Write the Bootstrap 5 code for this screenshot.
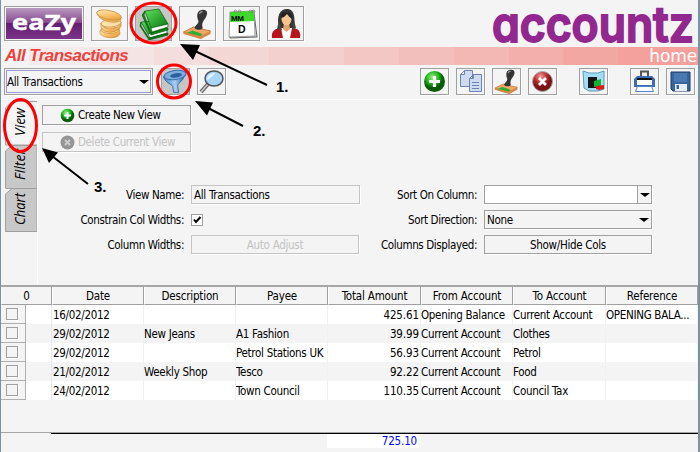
<!DOCTYPE html>
<html lang="en">
<head>
<meta charset="utf-8">
<title>All Transactions</title>
<link href="https://cdn.jsdelivr.net/npm/bootstrap@5.3.0/dist/css/bootstrap.min.css" rel="stylesheet">
<style>
body{width:700px;height:452px;background:#f4f4f4;color:#000;font:11.5px/14px "DejaVu Sans Condensed","DejaVu Sans",sans-serif;font-stretch:condensed;letter-spacing:-.3px;overflow:hidden}
svg{font-stretch:normal}
.shell{width:700px;height:452px;border-left:1px solid #7593a0;border-right:2px solid #7593a0}
.bar-top{height:47px;padding:6px 3px 0 3px}
.tool{background:#f4f4f4;border:1px solid #a0a0a0;box-shadow:1px 1px 0 #fff;padding:0;border-radius:0;flex:none;display:flex;align-items:center;justify-content:center}
.tool-lg{width:37px;height:35px}
.tool-sm{width:29px;height:27px}
.pressed{background:#c6c6c6}
.tool-logo{width:80px;height:35px}
.logo-text{font-family:Inter,"Open Sans",sans-serif;font-weight:600;font-size:49px;font-feature-settings:"cv11" 1}
.banner{height:18px;padding:0 1px 0 4px;background:linear-gradient(90deg,#f4f4f4 0 28px,#f4ecec 28px 88px,#f4e4e4 88px 153px,#f4dedd 153px 208px,#f3d7d5 208px 268px,#f3cfcd 268px 343px,#f3c7c4 343px 398px,#f3bfbc 398px 453px,#f3b7b4 453px 508px,#f3afab 508px 562px,#f3a7a3 562px 617px,#f4a09c 617px)}
.title-text{font:italic bold 17px/18px "Liberation Sans",sans-serif;color:#f0423c;letter-spacing:-.55px}
.home-text{font:17px/19px "DejaVu Sans",sans-serif;color:#fff;letter-spacing:-.1px}
.bar-tools{height:34px;padding:3px 3px 0}
.combo{border:1px solid #a0a0a0;box-shadow:1px 1px 0 #fff;background:#f4f4f4}
.combo-main{width:149px;height:27px;padding:1px;letter-spacing:-.3px}
.combo-main>div{border:1px solid #9a9ad6;height:100%;padding:0 1px 0 0}
.tri{width:0;height:0;border:5px solid transparent;border-top-color:#000;border-bottom:0;border-top-width:4px}
.panel-area{height:186px;border-top:1px solid #fff}
.panel-body{border-left:1px solid #fff;padding:5px 0 0 4px}
.flat{border:1px solid #a0a0a0;background:#f4f4f4;box-shadow:1px 1px 0 #fff;border-radius:0;padding:0;color:#000;font:inherit;letter-spacing:inherit;display:flex;align-items:center;justify-content:center}
.flat.off{border-color:#c4c4c4;color:#c3c3c3}
.flat.act{width:149px;height:20px;margin-bottom:7px;gap:3px;padding-left:17px;letter-spacing:-.36px;justify-content:flex-start}
.fields{display:grid;grid-template-columns:142px 169px 110px 168px;column-gap:7px;row-gap:6px;margin-top:33px;align-items:center}
.fields>span{text-align:right;letter-spacing:-.38px}
.fields>span:nth-child(4n+1){letter-spacing:-.38px}
.fields .ctl{height:19px;width:168px}
.fields .view-in{width:169px;justify-content:flex-start;padding-left:2px;border-color:#c4c4c4;letter-spacing:-.3px}
.drop-cell{width:14px;border-left:1px solid #a0a0a0;background:#f4f4f4}
.check{width:12px;height:12px;border:1px solid #a0a0a0;background:#fff;display:flex}
.grid-box{height:148px;border-top:2px solid #a6a6a6;border-bottom:1px solid #a6a6a6}
.trans{width:697px;table-layout:fixed;border-collapse:separate;border-spacing:0;margin:0}
.trans th{height:18px;padding:0;font-weight:400;text-align:center;border-right:1px solid #a0a0a0;border-bottom:1px solid #a0a0a0;border-left:1px solid #fff;background:#f4f4f4;line-height:14px;letter-spacing:-.18px}
.trans td{height:19px;padding:0;line-height:18px;border-right:1px solid #f1f1f1;background:#fff;white-space:nowrap;overflow:hidden}
.trans tr:nth-child(even) td{background:#f4f4f4}
.trans tbody td:first-child{border-right-color:#e6e6fa}
.trans td:nth-child(2){padding-left:1px}
.trans .num{text-align:right;padding-right:1px;letter-spacing:-.1px}
.pick{width:25px;height:19px;border-right:1px solid #b0b0b0;border-bottom:1px solid #b0b0b0;background:#f4f4f4;padding:3px 0 0 5px}
.pick i{display:block;width:12px;height:12px;border:1px solid #a0a0a0;box-shadow:1px 1px 0 #fff}
.totals{margin-left:50px;border-top:1px solid #000}
.totals div{margin-left:276px;width:92px;height:14px;background:#fff;color:#00f;text-align:right;padding-right:2px;letter-spacing:-.15px}
.notes{left:0;top:0;pointer-events:none}
</style>
<script src="https://cdn.jsdelivr.net/npm/bootstrap@5.3.0/dist/js/bootstrap.bundle.min.js"></script>
</head>
<body>
<svg width="0" height="0" class="position-absolute">
<defs>
<linearGradient id="gp" x2="0" y2="1"><stop stop-color="#b99ac0"/><stop offset=".48" stop-color="#85488f"/><stop offset=".5" stop-color="#641d70"/><stop offset="1" stop-color="#7b3487"/></linearGradient>
<linearGradient id="gg" x2="1" y2="1"><stop stop-color="#5ee05e"/><stop offset="1" stop-color="#087a10"/></linearGradient>
<linearGradient id="go" x2="1" y2="1"><stop stop-color="#fff3d0"/><stop offset=".6" stop-color="#f6bb5c"/><stop offset="1" stop-color="#dd8f30"/></linearGradient>
<radialGradient id="rg" cx=".4" cy=".3"><stop stop-color="#9cf080"/><stop offset=".6" stop-color="#1db81d"/><stop offset="1" stop-color="#0a5a0a"/></radialGradient>
<radialGradient id="rr" cx=".4" cy=".25"><stop stop-color="#eea0a0"/><stop offset=".6" stop-color="#c03030"/><stop offset="1" stop-color="#7a1414"/></radialGradient>
<linearGradient id="gb" x2="1"><stop stop-color="#3f7fc4"/><stop offset=".5" stop-color="#a8d0f4"/><stop offset="1" stop-color="#2e62a4"/></linearGradient>
<symbol id="stamp" viewBox="0 0 30 30"><path d="M1 23 11 18 28 22 19 29Z" fill="#f0a868" stroke="#b86a34" stroke-width=".8"/><path d="M4 24 10 21.500 20 25 17 29 9 27Z" fill="#2fae2f"/><path d="M1 23 18 27 28 22 28 25 18 30 1 25Z" fill="#d88748"/><path d="M12 19C13 16 16 15 16 12 14 8 14 2 19 1 25 0 26 4 23 9 21 12 19 14 20 18 21 21 14 22 12 19Z" fill="#343434"/><path d="M17 5Q18 2 20 3" stroke="#999" stroke-width="1.500" fill="none"/></symbol>
</defs>
</svg>
<div class="shell d-flex flex-column">
  <header class="bar-top d-flex justify-content-between">
    <div class="d-flex" style="gap:7px">
      <button class="tool tool-logo"><svg width="76" height="31" class="overflow-visible"><rect width="76" height="31" fill="url(#gp)"/><text x="6" y="22" font-family="Open Sans,sans-serif" font-weight="700" font-size="22" fill="#fff" stroke="#fff" stroke-width=".4" textLength="64" lengthAdjust="spacingAndGlyphs" letter-spacing="0">eaZy</text></svg></button>
      <button class="tool tool-lg"><svg width="31" height="31" stroke="#c98a3a" stroke-width=".7"><path d="M6 23C4 31 26 32 26 25L25 21H7Z" fill="url(#go)"/><ellipse cx="16" cy="22" rx="9" ry="3.500" fill="#fbd997"/><path d="M7 15C8 23 25 23 27 14V18C24 26 9 26 7 19Z" fill="url(#go)"/><ellipse cx="17" cy="15" rx="10" ry="4" transform="rotate(-5 17 15)" fill="#fbe0a8"/><path d="M3 4C3 13 22 17 27 12V9Z" fill="#f0b659"/><ellipse cx="15" cy="7" rx="12.500" ry="4.500" transform="rotate(12 15 7)" fill="url(#go)"/></svg></button>
      <button class="tool tool-lg pressed"><svg width="34" height="32" stroke="#075c0c" stroke-width=".7"><path d="M4 14 11 26 30 21 27 12Z" fill="url(#gg)"/><path d="M11 26 30 21V25L13 30Z" fill="#fff"/><path d="M4 14V18L12 30 31 25V27L12 32 3 18Z" fill="#087a10"/><path d="M8 3 22 1 31 16 14 20Z" fill="url(#gg)"/><path d="M14 20 31 16V19L15 24Z" fill="#fff"/><path d="M8 3 7 7 14 25 31 20V22L14 27 5 7Z" fill="#0c8b16"/></svg></button>
      <button class="tool tool-lg"><svg width="31" height="30"><use href="#stamp" width="31" height="30"/></svg></button>
      <button class="tool tool-lg"><svg width="32" height="32"><path d="M5 5 28 5 31 29 4 30Z" fill="#ddd" stroke="#666"/><path d="M4 4 28 3 29 28 3 29Z" fill="#fff" stroke="#777" stroke-width=".7"/><path d="M4 4 28 3V13L4 14Z" fill="#3fd92d"/><text x="5" y="12.500" font-family="Liberation Sans,sans-serif" font-weight="700" font-size="8" letter-spacing="-.5">MM</text><text x="12" y="25" font-family="Liberation Sans,sans-serif" font-weight="700" font-size="10.500">D</text><path d="M8 5q0-4 2-3t0 3M12 5q0-4 2-3t0 3M23 5q0-4 2-3t0 3M26 5q0-4 2-3t0 3" fill="none" stroke="#777" stroke-width=".7"/></svg></button>
      <button class="tool tool-lg"><svg width="32" height="32"><path d="M9 20C6 8 10 1 17 1 25 1 25 11 24 20L22 23H10Z" fill="#333"/><path d="M2 30C1 23 5 20 12 20L21 20C29 20 31 24 30 30Z" fill="#b8141c"/><path d="M11 20 13 30H20L22 20Z" fill="#fff"/><path d="M14 15H19L20 21 16.500 24 13 21Z" fill="#e6a36c"/><ellipse cx="16.500" cy="11" rx="5" ry="6.500" fill="#f6c58d"/><path d="M11 10Q10 4 16 4 23 4 22 11 19 9 17 6 15 9 11 10Z" fill="#222"/><path d="M9 12 7 21 12 22M24 12 26 20 22 22" fill="#444"/></svg></button>
    </div>
    <svg width="206" height="41" class="overflow-visible"><text x="3" y="36" class="logo-text" fill="#92278f" stroke="#92278f" stroke-width="1.800" textLength="202" lengthAdjust="spacingAndGlyphs" letter-spacing="0">accountz</text></svg>
  </header>
  <div class="banner d-flex justify-content-between flex-shrink-0"><span class="title-text">All Transactions</span><span class="home-text">home</span></div>
  <div class="bar-tools d-flex flex-shrink-0">
    <div class="combo combo-main flex-shrink-0"><div class="d-flex align-items-center justify-content-between"><span>All Transactions</span><span class="tri"></span></div></div>
    <button class="tool tool-sm pressed" style="margin-left:8px"><svg width="25" height="25"><path d="M1 6C3 14 8 14 9 17V23L14 24V17C15 14 22 12 22 7Z" transform="rotate(-8 12 12)" fill="url(#gb)" stroke="#285a98" stroke-width=".7"/><g transform="rotate(-8 12 6)"><ellipse cx="12" cy="6" rx="11" ry="4.500" fill="#7caee0" stroke="#3a70b0"/><ellipse cx="13" cy="6.500" rx="6" ry="2.200" fill="#2d5f9e"/></g></svg></button>
    <button class="tool tool-sm" style="margin-left:7px"><svg width="27" height="25"><path d="M10 15 3 23" stroke="#666" stroke-width="4"/><path d="M10 15 3 23" stroke="#ccc" stroke-width="1.500"/><ellipse cx="16" cy="9.500" rx="9" ry="7.500" fill="#a6d6fa" stroke="#555" stroke-width="1.500"/><path d="M9 9Q11 4 17 4 14 9 9 11Z" fill="#dff2ff"/></svg></button>
    <div class="d-flex ms-auto" style="gap:7px">
      <button class="tool tool-sm"><svg width="23" height="23"><circle cx="11.500" cy="11.500" r="10.500" fill="url(#rg)"/><path d="M11.500 6v11M6 11.500h11" stroke="#fff" stroke-width="3.200"/></svg></button>
      <button class="tool tool-sm"><svg width="25" height="25" fill="#cfdcf0" stroke="#6a83b4"><path d="M2.500 5.500 6.500 1.500H14.500V17.500H2.500ZM2.500 5.500H6.500V1.500"/><path d="M11.500 9.500 15.500 5.500H23.500V22.500H11.500ZM11.500 9.500H15.500V5.500M14 13.500H21M14 16.500H21M14 19.500H21"/></svg></button>
      <button class="tool tool-sm"><svg width="25" height="25"><use href="#stamp" width="25" height="25"/></svg></button>
      <button class="tool tool-sm" style="margin-right:15px"><svg width="23" height="23"><circle cx="11.500" cy="11.500" r="10" fill="url(#rr)" stroke="#aaa"/><path d="M8 8l7 7M15 8l-7 7" stroke="#fff" stroke-width="2.800"/></svg></button>
      <button class="tool tool-sm" style="margin-right:15px"><svg width="25" height="25"><path d="M2 2 8 4 17 4 23 2V20L17 22H8L3 19Z" fill="#a4dcf4" stroke="#5a9ab8"/><path d="M7 8H16V19H7Z" fill="#151515"/><path d="M13 12 20 10V17L13 18Z" fill="#12b52a"/><path d="M15 17 23 16V20L18 21 15 20Z" fill="#e01818"/></svg></button>
      <button class="tool tool-sm"><svg width="25" height="25"><path d="M9 8V2.500H16V8" fill="#eee" stroke="#555" stroke-width="2"/><path d="M2 10 5 7H20L23 10V18H2Z" fill="#3c6cae"/><path d="M5 9H20V12H5Z" fill="#111"/><path d="M5 11H20V16H5Z" fill="#fff"/><path d="M5.500 17.500H19.500L21.500 22.500H3.500Z" fill="#fff" stroke="#5283c4"/></svg></button>
      <button class="tool tool-sm"><svg width="23" height="23"><path d="M2 2H21V21H4L2 19Z" fill="#39659f" stroke="#1d3b6c"/><path d="M5 3H18V12H5Z" fill="#4a78b2"/><path d="M6 14H18V21H6Z" fill="#e9eef5"/><path d="M7.500 15H10V19H7.500Z" fill="#39659f"/></svg></button>
    </div>
  </div>
  <main class="panel-area d-flex flex-shrink-0">
    <svg class="flex-shrink-0" width="36" height="186" font-family="Open Sans,sans-serif" font-size="14" font-style="italic" letter-spacing="0"><path d="M4.500 131V94L11 88.500H36V131.500H4.500ZM4.500 88V51L11 45.500H36V88.500H4.500" fill="#c8c8c8" stroke="#a0a0a0"/><path d="M36.500 45H4.500V8L11 1.500H36" fill="#f4f4f4" stroke="#a0a0a0"/><text transform="translate(24 36) rotate(-90)" textLength="28" lengthAdjust="spacingAndGlyphs">View</text><text transform="translate(24 80) rotate(-90)" textLength="31" lengthAdjust="spacingAndGlyphs">Filter</text><text transform="translate(24 125) rotate(-90)" textLength="32" lengthAdjust="spacingAndGlyphs">Chart</text></svg>
    <div class="panel-body flex-grow-1">
      <button class="flat act"><svg width="15" height="15"><circle cx="7.500" cy="7.500" r="6.800" fill="url(#rg)"/><path d="M7.500 4v7M4 7.500h7" stroke="#fff" stroke-width="2"/></svg>Create New View</button>
      <button class="flat act off"><svg width="15" height="15"><circle cx="7.500" cy="7.500" r="7" fill="#969696"/><path d="M5 5l5 5M10 5l-5 5" stroke="#ccc" stroke-width="2"/></svg>Delete Current View</button>
      <div class="fields">
        <span>View Name:</span><div class="flat ctl view-in">All Transactions</div><span>Sort On Column:</span>
        <div class="flat ctl bg-white justify-content-end"><div class="drop-cell h-100 d-flex align-items-center justify-content-center"><span class="tri"></span></div></div>
        <span>Constrain Col Widths:</span><div class="check"><svg width="10" height="10"><path d="M2 4.500 4 7 8.500 2" fill="none" stroke="#000" stroke-width="2"/></svg></div><span>Sort Direction:</span>
        <div class="flat ctl justify-content-between" style="padding:0 2px">None<span class="tri"></span></div>
        <span>Column Widths:</span><div class="flat ctl off">Auto Adjust</div><span>Columns Displayed:</span><div class="flat ctl">Show/Hide Cols</div>
      </div>
    </div>
  </main>
  <section class="grid-box flex-shrink-0">
    <table class="trans">
      <colgroup><col style="width:51px"><col style="width:92px"><col style="width:92px"><col style="width:92px"><col style="width:93px"><col style="width:92px"><col style="width:93px"><col style="width:92px"></colgroup>
      <thead><tr><th>0</th><th>Date</th><th>Description</th><th>Payee</th><th>Total Amount</th><th>From Account</th><th>To Account</th><th>Reference</th></tr></thead>
      <tbody>
      <tr><td><div class="pick"><i></i></div></td><td>16/02/2012</td><td></td><td></td><td class="num">425.61</td><td>Opening Balance</td><td>Current Account</td><td>OPENING BALA...</td></tr>
      <tr><td><div class="pick"><i></i></div></td><td>29/02/2012</td><td>New Jeans</td><td>A1 Fashion</td><td class="num">39.99</td><td>Current Account</td><td>Clothes</td><td></td></tr>
      <tr><td><div class="pick"><i></i></div></td><td>29/02/2012</td><td></td><td>Petrol Stations UK</td><td class="num">56.93</td><td>Current Account</td><td>Petrol</td><td></td></tr>
      <tr><td><div class="pick"><i></i></div></td><td>21/02/2012</td><td>Weekly Shop</td><td>Tesco</td><td class="num">92.22</td><td>Current Account</td><td>Food</td><td></td></tr>
      <tr><td><div class="pick"><i></i></div></td><td>24/02/2012</td><td></td><td>Town Council</td><td class="num">110.35</td><td>Current Account</td><td>Council Tax</td><td></td></tr>
      </tbody>
    </table>
  </section>
  <footer class="totals flex-shrink-0"><div>725.10</div></footer>
</div>
<svg class="notes position-absolute" width="700" height="452" font-family="Liberation Sans,sans-serif" font-weight="700" font-size="15" letter-spacing="0">
  <g fill="none" stroke="#f00" stroke-width="3"><ellipse cx="153.500" cy="23" rx="22.500" ry="20"/><ellipse cx="174" cy="81.500" rx="16.500" ry="16.500"/><ellipse cx="20.500" cy="125.500" rx="16" ry="26"/></g>
  <g stroke="#000" stroke-width="2"><path d="M195 51 267 85M208 108 243 126M52 156 88 184"/></g>
  <path d="M180 44 200 45 193 60ZM195 101 213 102.500 207 115.500ZM42 148 58 152.500 49 163Z"/>
  <text x="276" y="92">1.</text><text x="253" y="136">2.</text><text x="94" y="192">3.</text>
</svg>
</body>
</html>
